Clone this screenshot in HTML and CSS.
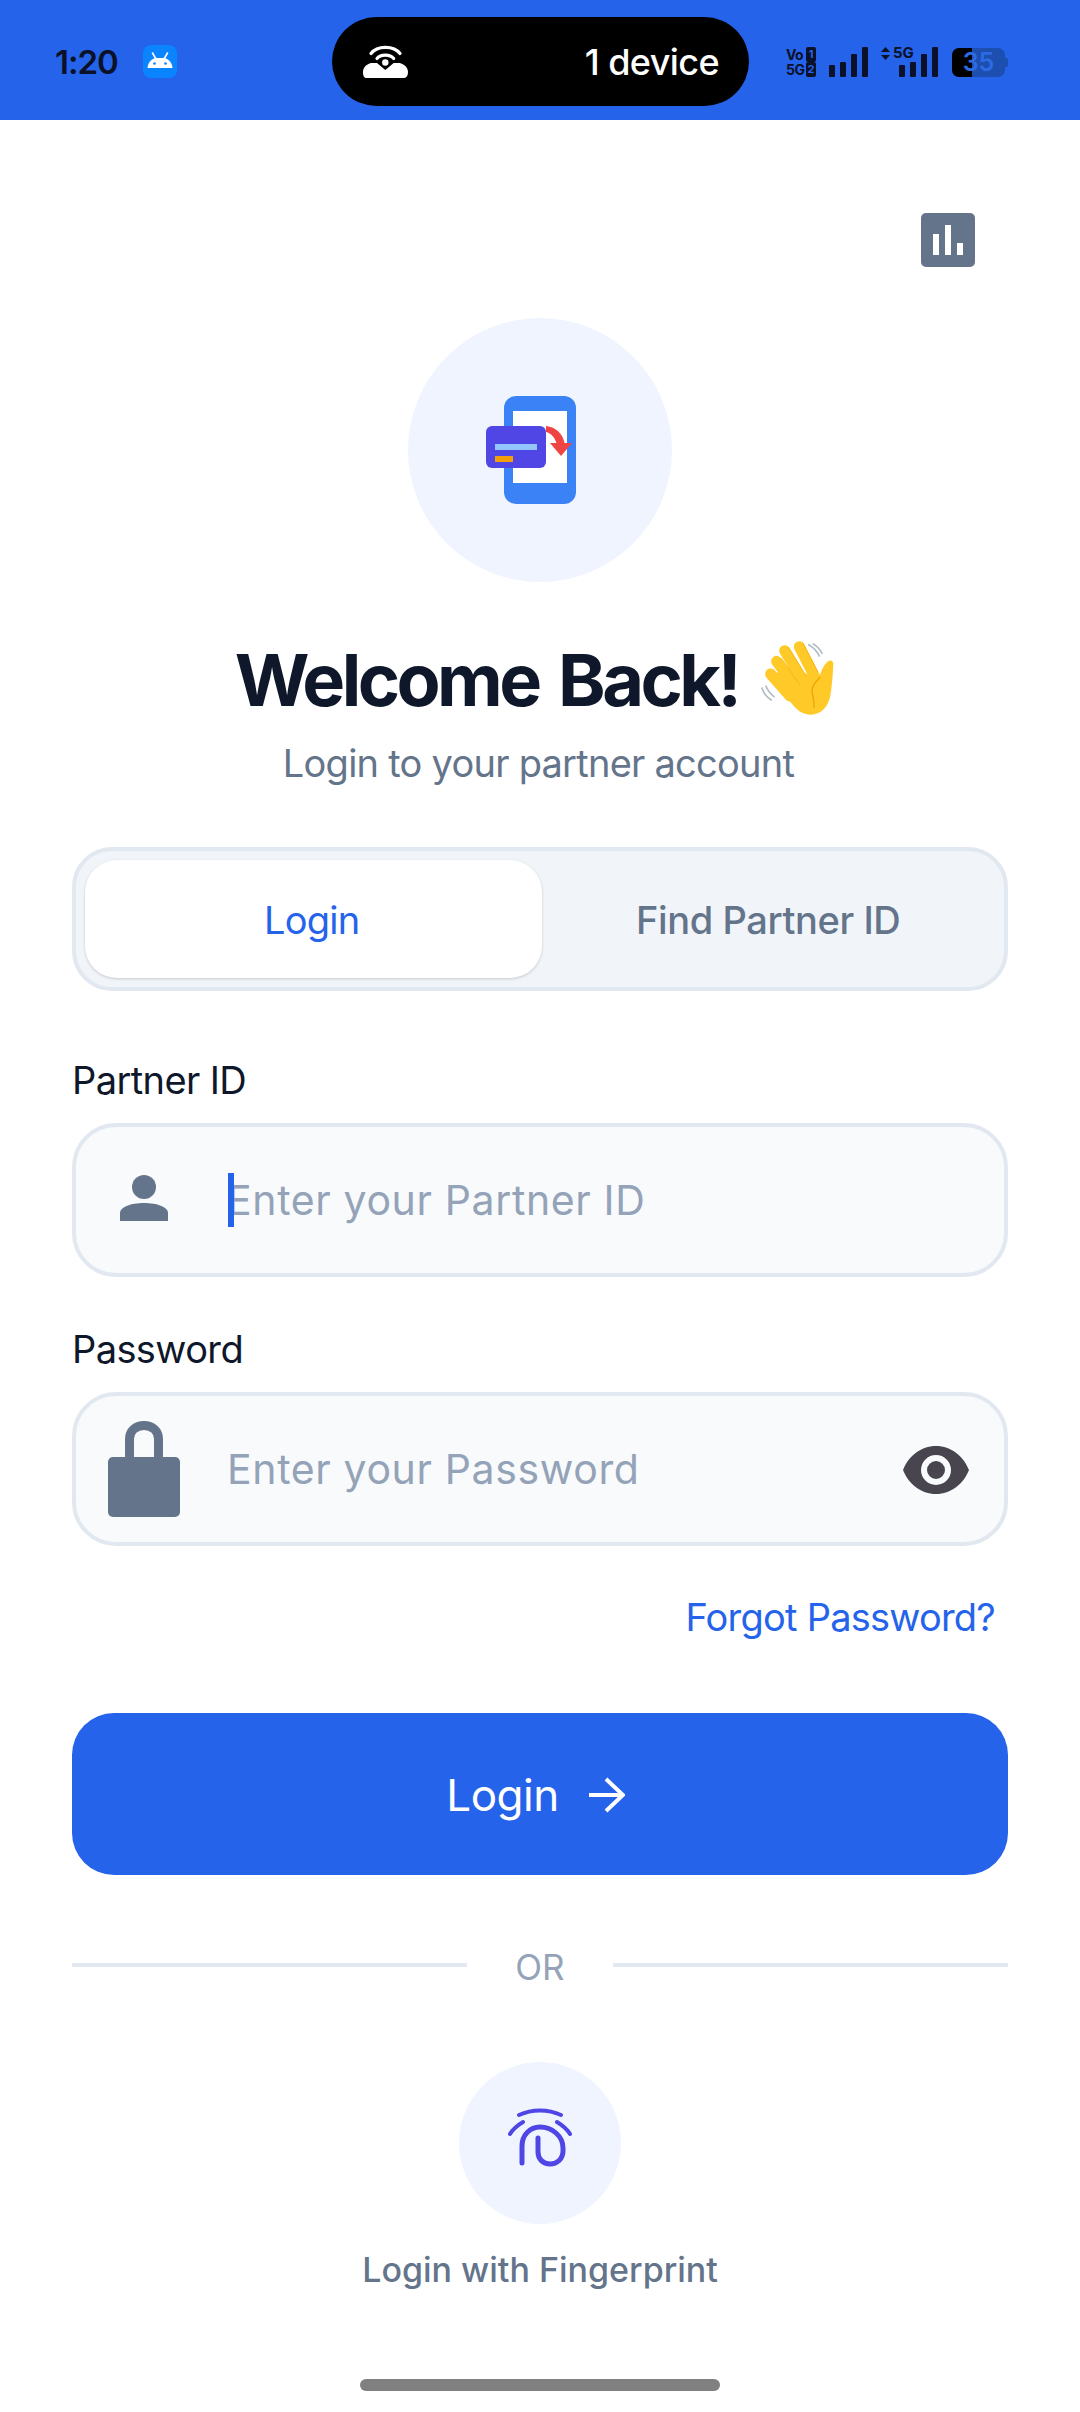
FILE: index.html
```html
<!DOCTYPE html>
<html lang="en">
<head>
  <meta charset="UTF-8">
  <meta name="viewport" content="width=device-width, initial-scale=1.0">
  <title>Partner Login</title>
  <link rel="stylesheet" href="styles.css">
</head>
<body>
  <!-- Status bar -->
  <div class="status-bar">
    <div class="status-left">
      <span class="clock">1:20</span>
      <svg class="android-badge" viewBox="0 0 34 33">
        <rect width="34" height="33" rx="8" fill="#0a84ff"/>
        <path d="M4.500 23c.3-5 3.600-8.800 8-10h9c4.400 1.200 7.700 5 8 10z" fill="#fff"/>
        <path d="M9.500 8l3.500 6M24.500 8l-3.500 6" stroke="#fff" stroke-width="1.600" stroke-linecap="round"/>
        <circle cx="11.500" cy="18.500" r="1.300" fill="#0a84ff"/>
        <circle cx="22.500" cy="18.500" r="1.300" fill="#0a84ff"/>
      </svg>
    </div>
    <div class="pill">
      <svg class="hotspot-icon" viewBox="0 0 45 33">
        <path d="M8 8.500C14 .2 31 .2 37 8.500M14 13.500c3.500-4.500 13-4.500 16.700 0" fill="none" stroke="#fff" stroke-width="3.200" stroke-linecap="round"/>
        <circle cx="22.300" cy="17.500" r="3.200" fill="#fff"/>
        <path d="M0 27c0-5 4-8 8-9h6l8.300 7 8.400-7h6c4 1 8.300 4 8.300 9 0 4-1.600 6-4.600 6H4c-3 0-4-2-4-6z" fill="#fff"/>
      </svg>
      <span class="pill-text">1 device</span>
    </div>
    <div class="status-right">
      <div class="sim-tags">
        <span>Vo</span><span class="sim-num">1</span>
        <span>5G</span><span class="sim-num">2</span>
      </div>
      <div class="signal">
        <i class="h1"></i><i class="h2"></i><i class="h3"></i><i class="h4"></i>
      </div>
      <div class="signal-5g">
        <svg class="updown" viewBox="0 0 9 13"><path d="M4.500 0L9 5H0zM4.500 13L0 8h9z" fill="#0a1128"/></svg>
        <span class="tag-5g">5G</span>
        <div class="signal">
          <i class="h1"></i><i class="h2"></i><i class="h3"></i><i class="h4"></i>
        </div>
      </div>
      <div class="battery"><span class="battery-fill"></span><span class="battery-num">35</span></div>
    </div>
  </div>

  <div class="page">
    <div class="stats-btn">
      <i class="b1"></i><i class="b2"></i><i class="b3"></i>
    </div>

    <div class="logo-circle">
      <svg class="logo" viewBox="0 0 120 120">
        <rect x="24" y="6" width="72" height="108" rx="12" fill="#3b82f6"/>
        <rect x="33" y="21" width="54" height="72" fill="#fff"/>
        <rect x="6" y="36" width="60" height="42" rx="6" fill="#4f46e5"/>
        <rect x="15" y="54" width="42" height="6" fill="#93c5fd"/>
        <rect x="15" y="66" width="18" height="6" fill="#f59e0b"/>
        <path d="M66 36c10 1 17 8 18.500 17H92L81 66 70 53h6.500C75 48 71 43 66 42z" fill="#ef4444"/>
      </svg>
    </div>

    <h1 class="title">
      <span>Welcome Back!</span>
      <svg class="wave" viewBox="0 0 300 300">
        <path d="M182 44c14 8 26 20 32 34M196 42c10 6 20 16 26 28M42 174c4 14 14 28 28 36M54 168c4 12 14 24 24 32" fill="none" stroke="#b0bec5" stroke-width="5" stroke-linecap="round"/>
        <path d="M68 132l58 66M86 94l64 84M110 62l56 92M154 50l46 90" stroke="#ffca28" stroke-width="33" stroke-linecap="round"/>
        <path d="M62 144l52-32 100 32c4-20 14-40 26-50 8-6 16-2 16 8-1 30-4 60-8 90-6 40-30 62-60 62-32 0-54-24-76-62z" fill="#ffca28"/>
        <path d="M86 88l56 82M107 55l54 88M150 42l46 88" stroke="#eda600" stroke-width="3" fill="none" opacity=".55" transform="translate(14 -4)"/>
        <path d="M216 142c-12 12-24 26-24 40 0 14 8 28 6 50" fill="none" stroke="#eda600" stroke-width="4" stroke-linecap="round"/>
      </svg>
    </h1>
    <p class="subtitle">Login to your partner account</p>

    <div class="tabs">
      <div class="tab active">Login</div>
      <div class="tab">Find Partner ID</div>
    </div>

    <div class="field-label first">Partner ID</div>
    <div class="field">
      <svg class="field-icon user" viewBox="0 0 48 46">
        <circle cx="24" cy="12" r="12" fill="#64748b"/>
        <path d="M0 46v-8c0-6 11-10 24-10s24 4 24 10v8z" fill="#64748b"/>
      </svg>
      <span class="cursor"></span>
      <span class="placeholder">Enter your Partner ID</span>
    </div>

    <div class="field-label">Password</div>
    <div class="field">
      <svg class="field-icon lock" viewBox="0 0 72 96">
        <path d="M21.500 38V18c0-8 6-13.500 14.500-13.500S50.500 10 50.500 18v20" fill="none" stroke="#64748b" stroke-width="9"/>
        <rect y="36" width="72" height="60" rx="5" fill="#64748b"/>
      </svg>
      <span class="placeholder">Enter your Password</span>
      <svg class="eye" viewBox="0 0 66 48">
        <path fill-rule="evenodd" d="M33 0C18 0 5.500 10 0 24c5.500 14 18 24 33 24s27.500-10 33-24C60.500 10 48 0 33 0zm0 9a15 15 0 1 1 0 30 15 15 0 0 1 0-30zm0 6a9 9 0 1 0 0 18 9 9 0 0 0 0-18z" fill="#49454f"/>
      </svg>
    </div>

    <a class="forgot">Forgot Password?</a>

    <button class="login-btn">
      <span>Login</span>
      <svg class="arrow" viewBox="0 0 36 36">
        <path d="M0 18h33M17 2l17 16-17 16" fill="none" stroke="#fff" stroke-width="4"/>
      </svg>
    </button>

    <div class="divider"><span>OR</span></div>

    <div class="finger-circle">
      <svg class="finger" viewBox="0 0 162 162">
        <path d="M60 53c13-6 29-6 42 0M51 72c3-5 8-9 13-12M111 72c-3-5-8-9-13-12" fill="none" stroke="#4f46e5" stroke-width="4" stroke-linecap="round"/>
        <path d="M63 101V84c0-11 8-19 18-19 12 0 23 9 23 21v3c0 8-6 13-13 13-7 0-12-5-12-12V76" fill="none" stroke="#4f46e5" stroke-width="5" stroke-linecap="round"/>
      </svg>
    </div>
    <div class="finger-label">Login with Fingerprint</div>

    <div class="home-bar"></div>
  </div>
</body>
</html>
```

FILE: styles.css
```css
* {
  box-sizing: border-box;
}
body {
  font-family: 'Inter', 'Liberation Sans', sans-serif;
  margin: 0;
  padding: 0;
  width: 1080px;
  height: 2412px;
  background: #fff;
  overflow: hidden;
}

/* Status bar */
.status-bar {
  height: 120px;
  padding-top: 3px;
  background: #2563eb;
  display: flex;
  align-items: center;
  color: #0a1128;
}
.status-left {
  width: 332px;
  padding-left: 55px;
  display: flex;
  align-items: center;
  gap: 25px;
}
.clock {
  font-size: 33px;
  font-weight: 600;
  letter-spacing: -1px;
}
.android-badge {
  width: 34px;
  height: 33px;
}
.pill {
  width: 417px;
  height: 89px;
  border-radius: 45px;
  background: #000;
  color: #fff;
  display: flex;
  align-items: center;
  justify-content: space-between;
  padding: 0 30px 0 31px;
}
.hotspot-icon {
  width: 45px;
  height: 33px;
}
.pill-text {
  font-size: 36px;
  font-weight: 500;
  letter-spacing: -0.6px;
}
.status-right {
  margin-left: 37px;
  display: flex;
  align-items: flex-end;
  height: 30px;
}
.sim-tags {
  width: 30px;
  display: grid;
  grid-template-columns: 18px 10px;
  column-gap: 2px;
  font-size: 14px;
  line-height: 15px;
  font-weight: 700;
  letter-spacing: -0.5px;
}
.sim-num {
  background: #0a1128;
  color: #2563eb;
  border-radius: 2px;
  text-align: center;
  font-size: 11px;
  letter-spacing: 0;
}
.signal {
  display: flex;
  align-items: flex-end;
  gap: 5px;
  height: 30px;
}
.status-right > .signal {
  margin-left: 13px;
}
.signal i {
  display: block;
  width: 6px;
  background: #0a1128;
  border-radius: 1px;
}
.signal .h1 { height: 12px; }
.signal .h2 { height: 15px; }
.signal .h3 { height: 23px; }
.signal .h4 { height: 30px; }
.signal-5g {
  position: relative;
  margin-left: 13px;
  width: 57px;
  height: 30px;
  padding-left: 18px;
}
.updown {
  position: absolute;
  left: 0;
  top: 0;
  width: 9px;
  height: 13px;
}
.tag-5g {
  position: absolute;
  left: 12px;
  top: -2px;
  font-size: 15px;
  line-height: 16px;
  font-weight: 700;
}
.battery {
  position: relative;
  margin-left: 14px;
  width: 53px;
  height: 29px;
  border-radius: 7px;
  background: #1d4fb0;
  text-align: center;
}
.battery::after {
  content: "";
  position: absolute;
  right: -3px;
  top: 10px;
  width: 3px;
  height: 9px;
  border-radius: 0 2px 2px 0;
  background: #1d4fb0;
}
.battery-fill {
  position: absolute;
  left: 0;
  top: 0;
  bottom: 0;
  width: 20px;
  border-radius: 7px 0 0 7px;
  background: #000;
}
.battery-num {
  position: relative;
  font-size: 25px;
  line-height: 29px;
  font-weight: 600;
  color: #2d6be4;
}

/* Main column */
.page {
  display: flex;
  flex-direction: column;
  align-items: stretch;
  padding: 93px 72px 0;
}
.stats-btn {
  align-self: flex-end;
  margin-right: 33px;
  width: 54px;
  height: 54px;
  border-radius: 5px;
  background: #64748b;
  display: flex;
  align-items: flex-end;
  justify-content: center;
  gap: 6px;
  padding-bottom: 12px;
}
.stats-btn i {
  display: block;
  width: 6px;
  background: #fff;
}
.stats-btn .b1 { height: 21px; }
.stats-btn .b2 { height: 30px; }
.stats-btn .b3 { height: 12px; }
.logo-circle {
  align-self: center;
  margin-top: 51px;
  width: 264px;
  height: 264px;
  border-radius: 50%;
  background: #eff4ff;
  display: flex;
  align-items: center;
  justify-content: center;
}
.logo {
  width: 120px;
  height: 120px;
}
.title {
  align-self: center;
  display: flex;
  align-items: center;
  margin: 56px 0 0;
  height: 84px;
  font-size: 72px;
  line-height: 84px;
  font-weight: 700;
  letter-spacing: -3.55px;
  word-spacing: 6px;
  color: #0f172a;
  white-space: nowrap;
}
.wave {
  flex: none;
  width: 100px;
  height: 100px;
  margin: -8px -3px -8px 10px;
}
.subtitle {
  margin: 16px 0 0;
  padding-right: 3px;
  font-size: 38px;
  line-height: 50px;
  letter-spacing: -0.75px;
  color: #64748b;
  text-align: center;
}

/* Tabs */
.tabs {
  margin-top: 59px;
  height: 144px;
  border: 4px solid #e2e8f0;
  border-radius: 40px;
  background: #f1f5f9;
  padding: 9px 6px 9px 9px;
  display: grid;
  grid-template-columns: 1fr 1fr;
}
.tab {
  display: flex;
  align-items: center;
  justify-content: center;
  padding: 2px 3px 0 0;
  border-radius: 32px;
  font-size: 38px;
  font-weight: 500;
  letter-spacing: -0.4px;
  color: #64748b;
}
.tab.active {
  background: #fff;
  color: #2563eb;
  font-weight: 400;
  letter-spacing: -0.7px;
  box-shadow: 0 1px 3px rgba(0, 0, 0, 0.18);
}

/* Form fields */
.field-label {
  margin-top: 49px;
  font-size: 38px;
  line-height: 46px;
  letter-spacing: -0.6px;
  color: #0f172a;
}
.field-label.first {
  margin-top: 66px;
}
.field {
  position: relative;
  margin-top: 20px;
  height: 154px;
  border: 4px solid #e2e8f0;
  border-radius: 44px;
  background: #f8fafc;
  display: flex;
  align-items: center;
  padding-left: 151px;
}
.field-icon {
  position: absolute;
}
.user {
  left: 44px;
  top: 48px;
  width: 48px;
  height: 46px;
}
.lock {
  left: 32px;
  top: 25px;
  width: 72px;
  height: 96px;
}
.cursor {
  position: absolute;
  left: 152px;
  top: 46px;
  width: 6px;
  height: 54px;
  background: #2563eb;
}
.placeholder {
  font-size: 41px;
  letter-spacing: 0.63px;
  color: #94a3b8;
}
.eye {
  position: absolute;
  right: 35px;
  top: 50px;
  width: 66px;
  height: 48px;
}
.forgot {
  margin-top: 48px;
  padding-right: 13px;
  font-size: 38px;
  line-height: 46px;
  letter-spacing: -0.77px;
  color: #2563eb;
  text-align: right;
}
.login-btn {
  margin-top: 73px;
  height: 162px;
  padding: 2px 9px 0 0;
  border: none;
  border-radius: 42px;
  background: #2563eb;
  color: #fff;
  font-family: inherit;
  font-size: 44px;
  letter-spacing: -0.5px;
  display: flex;
  align-items: center;
  justify-content: center;
  gap: 30px;
}
.arrow {
  width: 36px;
  height: 36px;
}
.divider {
  margin-top: 67px;
  height: 46px;
  display: flex;
  align-items: center;
  gap: 48px;
  font-size: 35px;
  color: #94a3b8;
}
.divider span {
  padding-top: 4px;
}
.divider::before,
.divider::after {
  content: "";
  flex: 1;
  height: 4px;
  background: #e2e8f0;
}
.finger-circle {
  align-self: center;
  margin-top: 74px;
  width: 162px;
  height: 162px;
  border-radius: 50%;
  background: #eff4ff;
}
.finger {
  display: block;
  width: 162px;
  height: 162px;
}
.finger-label {
  margin-top: 24px;
  font-size: 34px;
  line-height: 44px;
  font-weight: 500;
  color: #64748b;
  text-align: center;
}
.home-bar {
  align-self: center;
  margin-top: 87px;
  width: 360px;
  height: 12px;
  border-radius: 6px;
  background: #808080;
}
```
